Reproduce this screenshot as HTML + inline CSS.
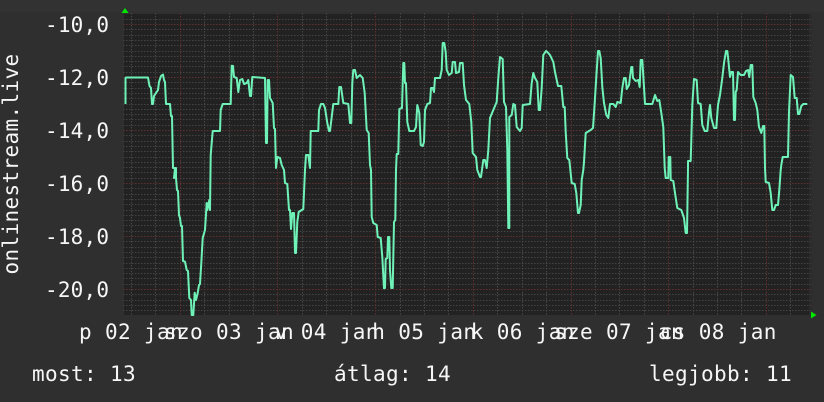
<!DOCTYPE html>
<html><head><meta charset="utf-8"><style>
html,body{margin:0;padding:0;background:#2f2f2f;width:824px;height:402px;overflow:hidden}
svg{display:block}
text{font-family:"DejaVu Sans Mono","Liberation Mono",monospace;font-size:21px;letter-spacing:.36px;fill:#f6f6f6}
</style></head><body>
<svg width="824" height="402" viewBox="0 0 824 402" xmlns="http://www.w3.org/2000/svg">
<rect width="824" height="402" fill="#2f2f2f"/>
<rect x="0" y="0" width="824" height="12" fill="#323232"/>
<rect x="124" y="14" width="685" height="301" fill="#222222"/>
<rect x="809" y="14" width="3" height="301" fill="#2b2b2b"/>
<path fill="none" stroke="#434343" stroke-width="1" stroke-dasharray="1.5 1.5" d="M123 19.5H811M123 29.5H811M123 35.5H811M123 40.5H811M123 45.5H811M123 51.5H811M123 56.5H811M123 61.5H811M123 66.5H811M123 72.5H811M123 82.5H811M123 88.5H811M123 93.5H811M123 98.5H811M123 104.5H811M123 109.5H811M123 114.5H811M123 119.5H811M123 125.5H811M123 135.5H811M123 141.5H811M123 146.5H811M123 151.5H811M123 157.5H811M123 162.5H811M123 167.5H811M123 172.5H811M123 178.5H811M123 188.5H811M123 194.5H811M123 199.5H811M123 204.5H811M123 210.5H811M123 215.5H811M123 220.5H811M123 225.5H811M123 231.5H811M123 241.5H811M123 247.5H811M123 252.5H811M123 257.5H811M123 263.5H811M123 268.5H811M123 273.5H811M123 278.5H811M123 284.5H811M123 294.5H811M123 300.5H811M123 305.5H811M123 310.5H811"/>
<path fill="none" stroke="#484848" stroke-width="1" stroke-dasharray="1.5 1.5" d="M131.5 13V316M155.5 13V316M204.5 13V316M229.5 13V316M253.5 13V316M302.5 13V316M326.5 13V316M351.5 13V316M400.5 13V316M424.5 13V316M448.5 13V316M497.5 13V316M522.5 13V316M546.5 13V316M595.5 13V316M619.5 13V316M644.5 13V316M693.5 13V316M717.5 13V316M790.5 13V316M741.5 13V316"/>
<path fill="none" stroke="#5e3030" stroke-width="1" stroke-dasharray="1.5 1.5" d="M123 24.5H811M123 77.5H811M123 130.5H811M123 183.5H811M123 236.5H811M123 289.5H811M180.5 13V316M277.5 13V316M375.5 13V316M473.5 13V316M571.5 13V316M668.5 13V316M766.5 13V316"/>
<path fill="#00e800" d="M125 8L128.5 13H121.5Z"/>
<path fill="#00e800" d="M816.5 315L811 311.5V318.5Z"/>
<polyline fill="none" stroke="#6ff2b8" stroke-width="2" stroke-linejoin="round" points="125.5,104 125.5,78 126,77.5 148,77.5 149.5,86 151,88 152,104 153,104 154,96 156,93 158,90 159,82 161,76 163,74.5 164,80 165,82 166,104 170,104 171,116 172,116 173,168 175,168 174,178 176,168 176,178 177,190 178,191 179,215 180,218 181,226 182,226 183,261 185,261.7 186.7,270 188,271 189.3,298 191,300 191.7,315 193.3,315 194.7,292.7 196,300 197.7,293 199,285 200,284 201.3,263 202.7,238 205,230 206.7,203 207.3,210 209.3,200 210,210 210.7,155 212.7,131 220,131 220.7,110 222.7,104 230.7,104 231.7,65.7 233,66 234,77 236.7,78 238.3,92 240,80 242.3,79 244,84 246.7,83 248.3,80 250,96 251,96 252.3,77 265,78 266,143 267,143 267.7,80 269,80 270,98 272.7,103 274,128 275,129 276,168 277.3,157 280,158 281.7,165 284,170 285,183 287.3,184 289,210 290,210 291,229 292.3,213 294,213 295,253 296,253 297.3,222 298.7,212 303.3,209 305,170 306,155 308.3,155 310,168 310.7,131 318.3,131 319,110 321,104 323.3,104 325,108 327.3,123 329,131 330,131 331.7,117 333.3,104 338.3,104 339.3,87 341,87 343.3,103 348.3,104 350,123 351.3,123 352.3,83 353.3,70 355,70 356.7,78 360,75 362.7,78 364.7,93 366.7,130 368.7,133 370,165 371,170 371.7,217 373.3,223 376.7,225 377.7,237 380.7,238 382.3,257 384,288.3 385,288 385.7,259 387.3,258 388,237 389.3,237 390,270 391.3,288 392.7,288 394,222 395.3,220 396,170 396.7,154 398.3,154 399.3,109 402,108 403.3,63 404.3,63 405,83 406,83 407.3,122 409.3,131 414,131 416,127 417.3,105 419.3,113 420.7,145 422.7,146 424,142 425,110 427.3,104 430,103 431,88 432.7,88 434,92 435,78 440,78 441.7,70 442.7,43 444.3,43 445.7,52 446.7,70 449,75 451.7,73 452.7,62 455,62 456,73 459,72 460,63 462.7,63 464,85 466,100 469.3,104 471.3,122 472.7,153 476,157 477.3,170 480,177 481,177 483.3,160 485,160 486.7,168 488.3,150 490,118 493.3,110 496.7,102 498.3,78 500,57 502.7,59 504,102 506,107 507.3,150 508.3,228 509.3,228 509.3,117 511.7,115 513.3,104 515,105 516.7,127 520,131 521.7,128 522.7,105 530,104 531.7,83 533.3,73 535,78 537.3,82 538.7,110 540,110 541.7,88 543.3,55 546,51 547.3,52 550,55 553.3,62 555,72 558,86 561.3,86 563.3,107 564.7,107 565.7,132 567.3,158 569.3,160 571.7,183 574.7,184 576.3,193 578,213 579,213 580.7,205 581.7,180 583.3,170 584,162 585.7,133 590.7,130 593,128 594.7,103 596.3,77 598,51 599.3,51 600.7,58 602.3,87 604,103 606.3,115 608.3,118 610,104 613.3,104 615.7,107 617.3,102 620.7,103 622.3,88 624,78 625.7,78 626.7,89 629,85 631.3,67 632.3,67 633,78 635.7,81 638.3,80 639.7,87 640.7,60 642.3,60 644,87 645,104 652.3,104 655,95 657.3,101 659.3,100 661.3,113 663.3,127 664.7,168 665.7,178 668.3,178 668.7,157 670.3,157 670.7,180 673.3,181 675,193 677.3,208 681.3,210 684,218 685.7,233 687,233 688,168 688,161 690.7,161 692.3,105 694,79 696.7,80 698,103 700.7,104 702.3,125 704.7,131 707.3,131 709,112 710,105 711.3,118 714,128 716.3,128 718,105 720,95 722.3,78 724,63 726,51 727.3,51 728.3,60 730,77 731.3,72 733,72 734,120 735,120 735.7,92 736.7,90 738,72 740.7,75 744,75 746,71 748,70 749.3,77 750.7,65 752.3,65 753.3,97 755.7,103 757.3,110 759,127 761.3,133 763,126 764.3,126 765,168 765.7,182 769,183 770.7,193 772.3,210 774,210 775.7,205 778,205 779.3,190 780.7,170 781.3,165 782.7,157 788,157 789,112 790.7,75 793,77 794.7,98 796.7,98 798,114 799.3,114 801.3,106 803.3,104 807.3,104"/>
<text x="45" y="32" style="letter-spacing:.2px">-10,0</text>
<text x="45" y="85" style="letter-spacing:.2px">-12,0</text>
<text x="45" y="138" style="letter-spacing:.2px">-14,0</text>
<text x="45" y="191" style="letter-spacing:.2px">-16,0</text>
<text x="45" y="244" style="letter-spacing:.2px">-18,0</text>
<text x="45" y="297" style="letter-spacing:.2px">-20,0</text>
<text transform="translate(18 274.5) rotate(-90)">onlinestream.live</text>
<text x="79" y="339">p 02 jan</text>
<text x="164" y="339">szo 03 jan</text>
<text x="274.7" y="339">v 04 jan</text>
<text x="372.3" y="339">h 05 jan</text>
<text x="470.7" y="339">k 06 jan</text>
<text x="554" y="339">sze 07 jan</text>
<text x="659.7" y="339">cs 08 jan</text>
<text x="32" y="381">most: 13</text>
<text x="334" y="381">átlag: 14</text>
<text x="649" y="381">legjobb: 11</text>
</svg>
</body></html>
